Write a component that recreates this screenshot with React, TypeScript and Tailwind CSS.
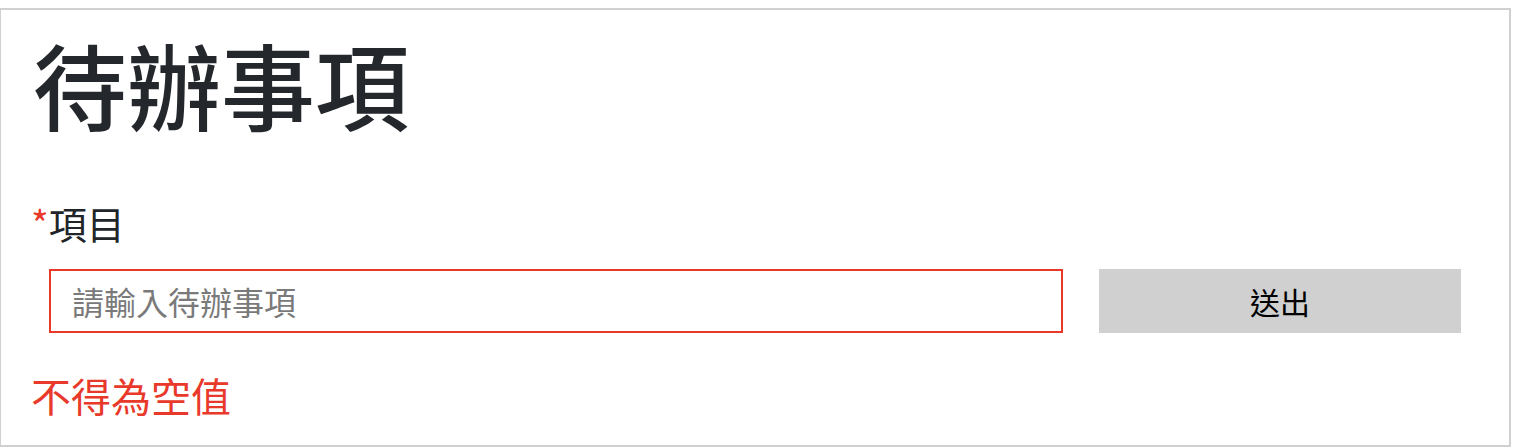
import React, { useState } from "react";

function App() {
  const [todo, setTodo] = useState("");

  return (
    <div className="font-['Noto_Sans_CJK_TC','Noto_Sans',sans-serif] bg-white">
      <div className="mt-2 -ml-px w-[1512px] h-[439px] border-2 border-[#d0d0d0] pl-8 pr-12">
        <h1 className="text-[94px] font-medium leading-none text-[#24272b] pt-[26px]">
          待辦事項
        </h1>

        <form
          onSubmit={(e) => e.preventDefault()}
          className="mt-[74px]"
        >
          <label className="flex items-center -ml-[2px] text-[38px] leading-none text-[#212529]">
            <span className="text-[#e8392b]">*</span>
            項目
          </label>

          <div className="flex items-center gap-9 mt-[27px] pl-4">
            <input
              type="text"
              value={todo}
              onChange={(e) => setTodo(e.target.value)}
              placeholder="請輸入待辦事項"
              className="flex-1 h-16 border-2 border-[#e8392b] px-[21px] text-[32px] text-[#212529] placeholder-[#7a7a7a] outline-none"
            />
            <button
              type="submit"
              className="w-[362px] h-16 bg-[#d0d0d0] text-[30px] text-black"
            >
              送出
            </button>
          </div>

          {/* Error Message */}
          <p className="mt-[42px] -ml-[2px] text-[40px] leading-none text-[#e8392b]">
            不得為空值
          </p>
        </form>
      </div>
    </div>
  );
}

export default App;
